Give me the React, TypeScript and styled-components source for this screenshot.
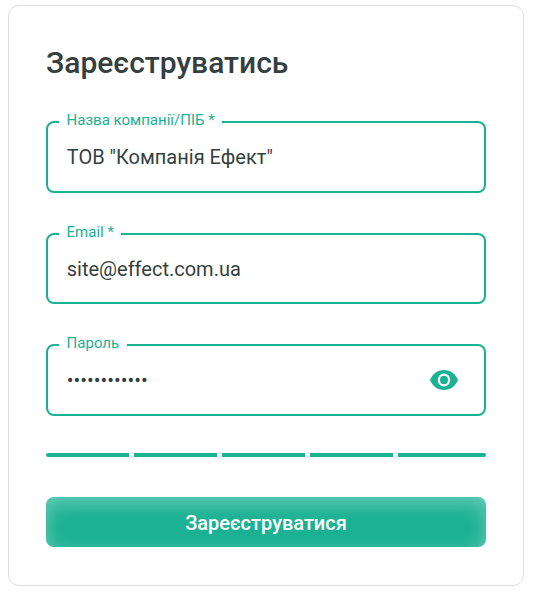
import React from "react";
import styled, { createGlobalStyle } from "styled-components";

const GlobalStyle = createGlobalStyle`
  *, *::before, *::after { box-sizing: border-box; }
  body {
    margin: 0;
    background: #fff;
    color: #353f40;
    font-family: Roboto, "Liberation Sans", sans-serif;
  }
`;

const green = "#1bb193";

const Card = styled.form`
  display: flex;
  flex-direction: column;
  width: 516px;
  height: 581px;
  margin: 5px 0 0 8px;
  padding: 35px 37px 0;
  border: 1px solid #dedede;
  border-radius: 11px;
`;

const Title = styled.h1`
  margin: 0 0 36px;
  height: 44px;
  font-size: 30px;
  font-weight: 500;
  line-height: 43px;
  white-space: nowrap;
`;

const Field = styled.div<{ $height: number; $after: number }>`
  position: relative;
  display: flex;
  align-items: center;
  justify-content: space-between;
  height: ${(p) => p.$height}px;
  margin-bottom: ${(p) => p.$after}px;
  padding: 0 26px 0 18.75px;
  border: 2px solid ${green};
  border-radius: 8px;
`;

const Label = styled.label`
  position: absolute;
  top: -13px;
  left: 11px;
  padding: 0 7.4px 0 7.6px;
  background: #fff;
  color: ${green};
  font-size: 15px;
  line-height: 20px;
  white-space: nowrap;
`;

const Value = styled.span`
  font-size: 20px;
  line-height: 28px;
  white-space: nowrap;
`;

const Eye = styled.svg`
  display: block;
  width: 28px;
  height: 20px;
  fill: ${green};
`;

const Strength = styled.div`
  display: flex;
  gap: 5px;
  height: 4px;
  margin-bottom: 40px;
  border-radius: 2px;
  overflow: hidden;
`;

const StrengthBar = styled.span`
  flex: 0 0 83px;
  background: ${green};
  &:last-child { flex: 1; }
`;

const Submit = styled.button`
  height: 50px;
  padding: 2px 0 0;
  border: 0;
  border-radius: 8px;
  background: ${green};
  box-shadow: inset 0 6px 20px rgba(255, 255, 255, 0.35);
  color: #fff;
  font-family: inherit;
  font-size: 20px;
  font-weight: 500;
  line-height: 28px;
`;

export default function App() {
  return (
    <>
      <GlobalStyle />
      <Card>
        <Title>Зареєструватись</Title>
        <Field $height={72} $after={40}>
          <Label>Назва компанії/ПІБ *</Label>
          <Value>ТОВ "Компанія Ефект"</Value>
        </Field>
        <Field $height={71} $after={40}>
          <Label>Email *</Label>
          <Value>site@effect.com.ua</Value>
        </Field>
        <Field $height={72} $after={37}>
          <Label>Пароль</Label>
          <Value>••••••••••••</Value>
          <Eye viewBox="1 4.5 22 15" preserveAspectRatio="none">
            <path d="M12 4.5C7 4.5 2.73 7.61 1 12c1.73 4.39 6 7.5 11 7.5s9.27-3.11 11-7.5c-1.73-4.39-6-7.5-11-7.5z" />
            <circle cx="12" cy="12" r="4.9" fill="#fff" />
            <circle cx="12" cy="12" r="3.15" />
          </Eye>
        </Field>
        <Strength>
          {[0, 1, 2, 3, 4].map((i) => (
            <StrengthBar key={i} />
          ))}
        </Strength>
        <Submit type="button">Зареєструватися</Submit>
      </Card>
    </>
  );
}
